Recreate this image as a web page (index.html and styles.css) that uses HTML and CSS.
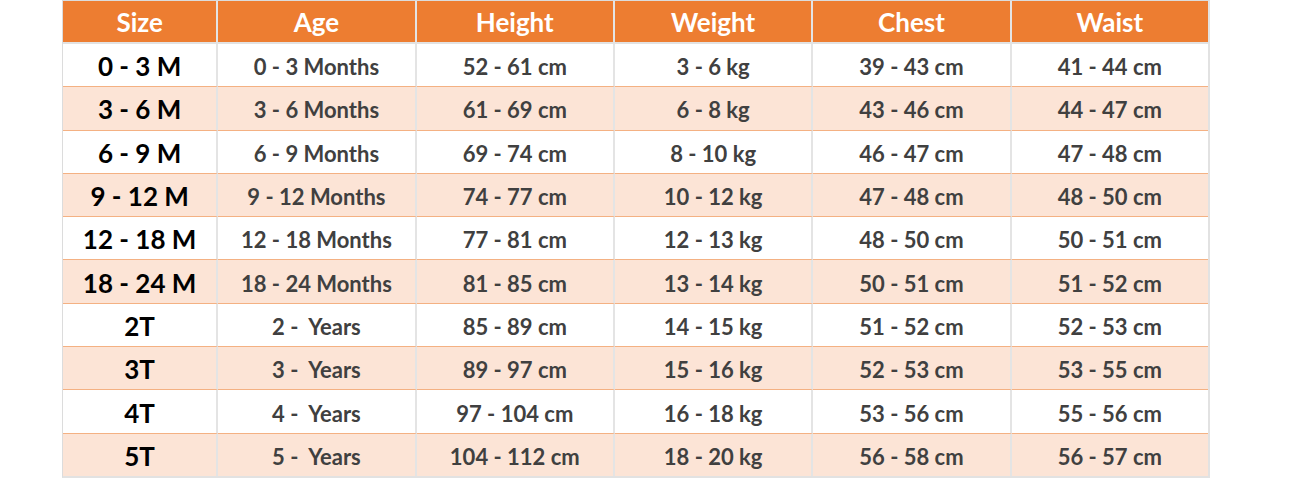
FILE: index.html
```html
<!DOCTYPE html>
<html>
<head>
<meta charset="utf-8">
<link rel="stylesheet" href="styles.css">
</head>
<body>
<table class="chart">
  <colgroup>
    <col class="c-size"><col class="c-age"><col class="c-std"><col class="c-std"><col class="c-std"><col class="c-last">
  </colgroup>
  <thead>
    <tr><th>Size</th><th>Age</th><th>Height</th><th>Weight</th><th>Chest</th><th>Waist</th></tr>
  </thead>
  <tbody>
    <tr><td class="sz">0 - 3 M</td><td>0 - 3 Months</td><td>52 - 61 cm</td><td>3 - 6 kg</td><td>39 - 43 cm</td><td>41 - 44 cm</td></tr>
    <tr class="alt"><td class="sz">3 - 6 M</td><td>3 - 6 Months</td><td>61 - 69 cm</td><td>6 - 8 kg</td><td>43 - 46 cm</td><td>44 - 47 cm</td></tr>
    <tr><td class="sz">6 - 9 M</td><td>6 - 9 Months</td><td>69 - 74 cm</td><td>8 - 10 kg</td><td>46 - 47 cm</td><td>47 - 48 cm</td></tr>
    <tr class="alt"><td class="sz">9 - 12 M</td><td>9 - 12 Months</td><td>74 - 77 cm</td><td>10 - 12 kg</td><td>47 - 48 cm</td><td>48 - 50 cm</td></tr>
    <tr><td class="sz">12 - 18 M</td><td>12 - 18 Months</td><td>77 - 81 cm</td><td>12 - 13 kg</td><td>48 - 50 cm</td><td>50 - 51 cm</td></tr>
    <tr class="alt"><td class="sz">18 - 24 M</td><td>18 - 24 Months</td><td>81 - 85 cm</td><td>13 - 14 kg</td><td>50 - 51 cm</td><td>51 - 52 cm</td></tr>
    <tr><td class="sz">2T</td><td>2 -&nbsp; Years</td><td>85 - 89 cm</td><td>14 - 15 kg</td><td>51 - 52 cm</td><td>52 - 53 cm</td></tr>
    <tr class="alt"><td class="sz">3T</td><td>3 -&nbsp; Years</td><td>89 - 97 cm</td><td>15 - 16 kg</td><td>52 - 53 cm</td><td>53 - 55 cm</td></tr>
    <tr><td class="sz">4T</td><td>4 -&nbsp; Years</td><td>97 - 104 cm</td><td>16 - 18 kg</td><td>53 - 56 cm</td><td>55 - 56 cm</td></tr>
    <tr class="alt last"><td class="sz">5T</td><td>5 -&nbsp; Years</td><td>104 - 112 cm</td><td>18 - 20 kg</td><td>56 - 58 cm</td><td>56 - 57 cm</td></tr>
  </tbody>
</table>
</body>
</html>
```
FILE: styles.css
```css
html, body {
  margin: 0;
  padding: 0;
  background: #ffffff;
}
body {
  padding-left: 62px;
}
.chart {
  border-collapse: separate;
  border-spacing: 0;
  table-layout: fixed;
  width: 1148px;
  font-family: Lato, "Open Sans", "Liberation Sans", sans-serif;
  font-weight: 700;
  border-top: 1px solid #dcdcdc;
  border-left: 1px solid #dcdcdc;
  border-right: 2px solid #e2e2e2;
  border-bottom: 2px solid #e2e2e2;
}
.c-size { width: 155px; }
.c-age { width: 198px; }
.c-std { width: 198px; }
.c-last { width: 196px; }
.chart th,
.chart td {
  padding: 0;
  text-align: center;
  vertical-align: middle;
  white-space: nowrap;
  border-right: 2px solid #e4e4e4;
}
.chart th:last-child,
.chart td:last-child {
  border-right: none;
}
.chart th {
  background: #ed7d31;
  color: #ffffff;
  font-size: 26px;
  line-height: 40px;
  height: 40px;
  padding-top: 1px;
  border-bottom: 2px solid #e2e2e2;
}
.chart td {
  color: #404040;
  font-size: 22px;
  line-height: 39px;
  height: 39.3px;
  padding-top: 3px;
  border-bottom: 1px solid #f4b183;
}
.chart tr.last td {
  border-bottom: none;
}
.chart td.sz {
  color: #000000;
  font-size: 26px;
}
.chart tr.alt td {
  background: #fce4d6;
}
```
